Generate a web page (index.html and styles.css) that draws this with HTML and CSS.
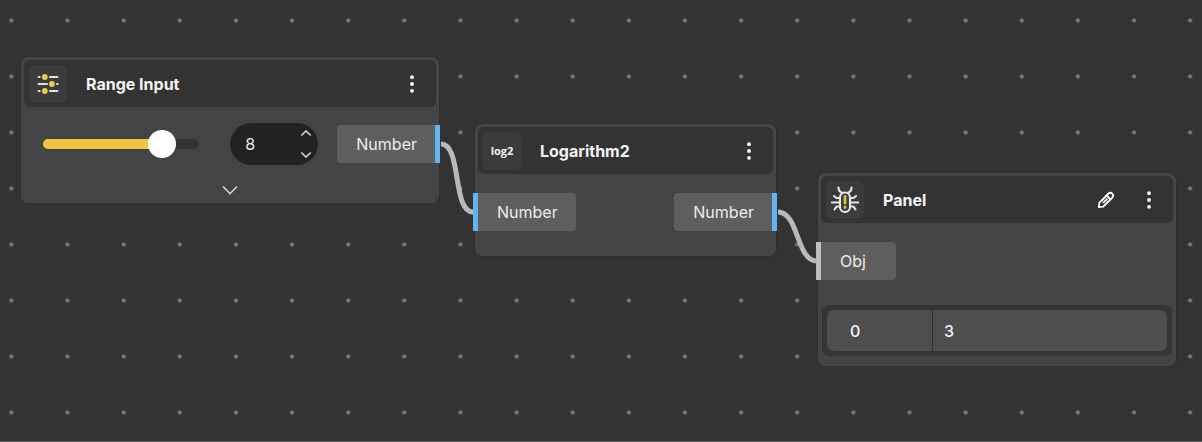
FILE: index.html
```
<!DOCTYPE html>
<html lang="en">
<head>
<meta charset="utf-8">
<title>Node editor</title>
<link rel="stylesheet" href="styles.css">
</head>
<body>
<main class="canvas">
  <svg class="layer" aria-hidden="true">
    <defs>
      <pattern id="dots" x="-17" y="-7.5" width="56.13" height="56" patternUnits="userSpaceOnUse">
        <circle cx="28.4" cy="28" r="2.1" fill="#7c7c7c"/>
      </pattern>
    </defs>
    <rect width="100%" height="100%" fill="url(#dots)"/>
  </svg>

  <section class="node node-range">
    <header class="head">
      <span class="tile">
        <svg width="24" height="22" viewBox="0 0 24 22" fill="none" stroke="#dedede" stroke-width="2.2" stroke-linecap="round">
          <path d="M2.600 4H3.600M14 4H21.500M2.600 11H11M21 11H21.500M2.600 18H3.600M14 18H21.500"/>
          <g fill="#f0c850" stroke="none"><circle cx="8.800" cy="4" r="2.900"/><circle cx="15.900" cy="11" r="2.900"/><circle cx="8.800" cy="18" r="2.900"/></g>
        </svg>
      </span>
      <h2 class="title">Range Input</h2>
      <button class="icon-btn" aria-label="Range Input menu"><svg width="6" height="20" viewBox="0 0 6 20" fill="#fff"><circle cx="3" cy="3.200" r="1.900"/><circle cx="3" cy="10" r="1.900"/><circle cx="3" cy="16.800" r="1.900"/></svg></button>
    </header>
    <div class="range-row">
      <input class="slider" type="range" min="-1" max="10" value="8" aria-label="Range value">
      <div class="stepper">
        <input class="number" type="number" value="8" aria-label="Number value">
        <div class="steps">
          <button aria-label="Increase"><svg width="12" height="8" viewBox="0 0 12 8"><path d="M1.300 6.500 6 2l4.700 4.500"/></svg></button>
          <button aria-label="Decrease"><svg width="12" height="8" viewBox="0 0 12 8"><path d="M1.300 1.500 6 6l4.700-4.500"/></svg></button>
        </div>
      </div>
      <div class="port out">Number</div>
    </div>
    <button class="expand" aria-label="Expand"><svg width="18" height="11" viewBox="0 0 18 11"><path d="M2 1.500 9 8.700l7-7.200"/></svg></button>
  </section>

  <section class="node node-log">
    <header class="head">
      <span class="tile tile-text">log2</span>
      <h2 class="title">Logarithm2</h2>
      <button class="icon-btn" aria-label="Logarithm2 menu"><svg width="6" height="20" viewBox="0 0 6 20" fill="#fff"><circle cx="3" cy="3.200" r="1.900"/><circle cx="3" cy="10" r="1.900"/><circle cx="3" cy="16.800" r="1.900"/></svg></button>
    </header>
    <div class="ports">
      <div class="port in">Number</div>
      <div class="port out">Number</div>
    </div>
  </section>

  <section class="node node-panel">
    <header class="head">
      <span class="tile">
        <svg width="30" height="28" viewBox="0 0 30 28" fill="none" stroke="#e8e8e8" stroke-width="2.100" stroke-linecap="round" stroke-linejoin="round">
          <path d="M8.500 1.500c0 3.500 1.500 4.700 4 5.300M21.500 1.500c0 3.500-1.500 4.700-4 5.300"/>
          <rect x="10" y="6.500" width="10" height="19.500" rx="5"/>
          <path d="M10 12H6.500L4 10M20 12h3.500L26 10M10 16.500H1.800M20 16.500h8.200M10 20.500H6.500L4.500 23.500M20 20.500h3.500l2 3"/>
          <path d="M15 10.500v6.500M15 21v.6" stroke="#dfc03c" stroke-width="2.800"/>
        </svg>
      </span>
      <h2 class="title">Panel</h2>
      <button class="icon-btn edit" aria-label="Edit panel"><svg width="20" height="20" viewBox="0 0 20 20" fill="none" stroke="#fff" stroke-width="1.800" stroke-linejoin="round"><path d="M2.800 17.200 3.300 12.800 12 4Q14.400 1.800 16.300 3.700 18.200 5.600 16 8L7.200 16.700ZM10.600 5.400l4 4M7 13l4.500-4.500"/></svg></button>
      <button class="icon-btn" aria-label="Panel menu"><svg width="6" height="20" viewBox="0 0 6 20" fill="#fff"><circle cx="3" cy="3.200" r="1.900"/><circle cx="3" cy="10" r="1.900"/><circle cx="3" cy="16.800" r="1.900"/></svg></button>
    </header>
    <div class="ports">
      <div class="port in any">Obj</div>
    </div>
    <div class="output">
      <table class="values">
        <tr><th scope="row">0</th><td>3</td></tr>
      </table>
    </div>
  </section>

  <svg class="layer edges" aria-hidden="true" fill="none" stroke="#b9b9b9" stroke-width="5">
    <path d="M441 144C462 144 452 212 473 212"/>
    <path d="M778 212C799 212 796 261 817 261"/>
  </svg>
</main>
</body>
</html>
```
FILE: styles.css
```
* { box-sizing: border-box; }

body {
  margin: 0;
  background: #333;
  color: #f4f4f4;
  font: 16px/20px Inter, "Liberation Sans", sans-serif;
}

button {
  display: flex;
  align-items: center;
  justify-content: center;
  padding: 0;
  border: 0;
  background: none;
  cursor: pointer;
}

.canvas {
  position: relative;
  min-height: 100vh;
  overflow: hidden;
  border-bottom: 1px solid #666;
}

.layer {
  position: absolute;
  inset: 0;
  width: 100%;
  height: 100%;
}

.edges { pointer-events: none; }

.node {
  position: absolute;
  padding: 3px;
  border-radius: 8px;
  background: #444;
  box-shadow: 0 0 0 1px #2d2d2d, inset 0 0 0 1px #484848;
}

.node-range { left: 21px; top: 57px; width: 418px; }
.node-log { left: 475px; top: 124px; width: 301px; }
.node-panel { left: 818px; top: 173px; width: 358px; }

.head {
  display: flex;
  align-items: center;
  padding: 5px 14px 4px 5px;
  border-radius: 6px;
  background: #333;
}

.tile {
  display: flex;
  align-items: center;
  justify-content: center;
  width: 38px;
  height: 38px;
  border-radius: 6px;
  background: #3b3b3b;
}

.tile-text {
  font: 700 11px/16px "Open Sans", sans-serif;
}

.title {
  flex: 1;
  margin: 0 0 0 19px;
  font-size: 16px;
  font-weight: 700;
}

.icon-btn { width: 20px; height: 24px; }
.edit { margin-right: 23px; }

.range-row {
  display: flex;
  align-items: center;
  padding: 16px 0 0 19px;
}

.slider {
  flex: 1;
  min-width: 0;
  height: 28px;
  margin: 0 31px 0 0;
  appearance: none;
  background: none;
}

.slider::-webkit-slider-runnable-track {
  height: 10px;
  border-radius: 5px;
  background: linear-gradient(90deg, #f0c544 76%, #333 76%);
}

.slider::-webkit-slider-thumb {
  appearance: none;
  width: 28px;
  height: 28px;
  margin-top: -9px;
  border-radius: 50%;
  background: #fff;
}

.stepper {
  display: flex;
  width: 88px;
  height: 42px;
  margin-right: 19px;
  padding: 0 6px 0 15px;
  border-radius: 21px;
  background: #222;
}

.number {
  flex: 1;
  min-width: 0;
  padding: 0;
  border: 0;
  background: none;
  color: #e8e8e8;
  font: inherit;
  appearance: textfield;
}

.number::-webkit-inner-spin-button { appearance: none; }

.steps {
  display: flex;
  flex-direction: column;
  justify-content: space-between;
  padding: 6px 0;
}

.steps path,
.expand path {
  fill: none;
  stroke: #dcdcdc;
  stroke-width: 1.5;
}

.port {
  height: 38px;
  padding: 0 19px;
  border-radius: 4px;
  background: #5e5e5e;
  color: #ececec;
  line-height: 38px;
}

.in {
  margin-left: -5px;
  padding-right: 18px;
  border-left: 5px solid #63b3f0;
  border-radius: 0 4px 4px 0;
}

.out {
  margin-right: -4px;
  padding-right: 18px;
  border-right: 5px solid #63b3f0;
  border-radius: 4px 0 0 4px;
}

.any {
  min-width: 80px;
  border-color: #c0c0c0;
}

.expand {
  width: 30px;
  height: 20px;
  margin: 15px auto 0;
}

.ports {
  display: flex;
  justify-content: space-between;
  padding: 19px 0 22px;
}

.output {
  margin: 3px 1px 7px;
  padding: 5px;
  border-radius: 7px;
  background: #353535;
}

.values {
  width: 100%;
  border-spacing: 0;
  border-radius: 7px;
  background: #4e4e4e;
}

.values th,
.values td {
  height: 41px;
  padding: 0 11px;
  font-weight: 500;
  text-align: left;
}

.values th {
  width: 106px;
  padding-left: 23px;
  border-right: 1px solid #333;
}
```
